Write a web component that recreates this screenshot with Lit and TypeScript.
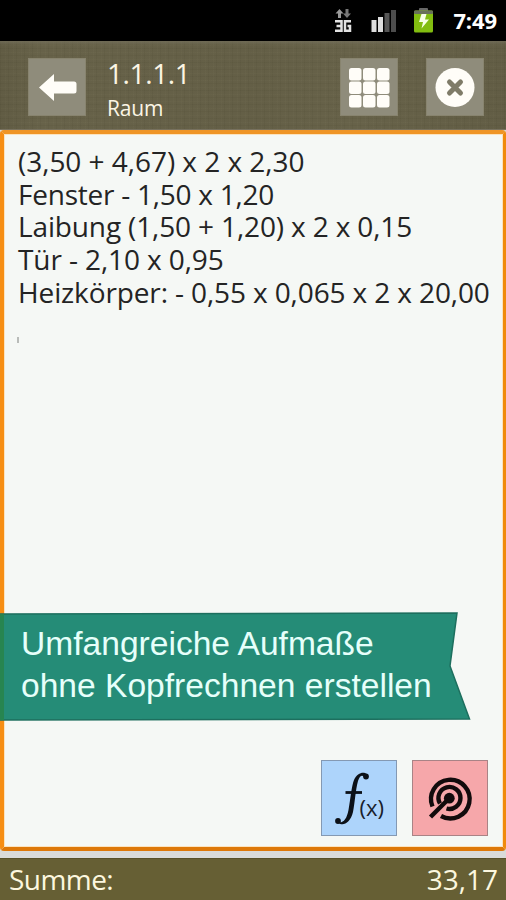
import { LitElement, html, svg, css } from "lit";
import { customElement } from "lit/decorators.js";
import { styleMap } from "lit/directives/style-map.js";

@customElement("app-root")
export class AppRoot extends LitElement {
  static styles = css`
    :host {
      display: flex;
      flex-direction: column;
      position: relative;
      width: 506px;
      height: 900px;
      overflow: hidden;
      background: #d9dbd9;
      font-family: "Open Sans", "Noto Sans", sans-serif;
    }
    * { box-sizing: border-box; }
    svg { display: block; }
    .status {
      flex: none;
      height: 41px;
      background: #000;
      display: flex;
      justify-content: flex-end;
      align-items: center;
      padding-right: 9px;
    }
    .status svg { width: 106px; height: 41px; margin-right: 14px; }
    .time { color: #fff; font-weight: 700; font-size: 22px; line-height: 41px; letter-spacing: -0.1px; }
    .header {
      flex: none;
      height: 89px;
      display: flex;
      align-items: center;
      padding: 4px 22px 0 28px;
      background:
        linear-gradient(rgba(120, 116, 98, 0.6), rgba(110, 108, 92, 0) 4px),
        linear-gradient(90deg, rgba(40, 35, 20, 0.1), transparent 8%, rgba(40, 35, 20, 0.05) 50%, transparent 70%, rgba(40, 35, 20, 0.08)),
        repeating-linear-gradient(90deg, rgba(40, 38, 15, 0.05) 0 1px, transparent 1px 5px, rgba(150, 145, 115, 0.05) 5px 6px, transparent 6px 8px),
        repeating-linear-gradient(rgba(40, 38, 15, 0.05) 0 1px, transparent 1px 4px, rgba(150, 145, 115, 0.05) 4px 5px, transparent 5px 7px),
        #676249;
      border-bottom: 1px solid #77715f;
    }
    .tile { flex: none; width: 58px; height: 58px; background: #8f8c7b; border: 1px solid #88846f; }
    .tile svg { width: 56px; height: 56px; }
    .titles { flex: 1; padding: 3px 0 0 21px; color: #fbf5e4; }
    .number { font-size: 28px; line-height: 36px; height: 36px; letter-spacing: -0.4px; }
    .room { font-size: 21px; line-height: 30px; height: 30px; margin-top: 2px; letter-spacing: -0.2px; }
    .grid-tile { margin-right: 28px; }
    .editor {
      flex: none;
      height: 721px;
      background: #f5f8f5;
      border: solid #f28c12;
      border-width: 4px 3px 4px 4px;
      border-color: #ef9526 #f08a0c #dd7808 #f68e14;
      border-radius: 4px;
      box-shadow: inset 0 0 0 1px #fbe3bf;
      padding: 11px 0 0 14px;
      position: relative;
    }
    .line { font-size: 28px; line-height: 32.7px; height: 32.7px; white-space: pre; color: #242424; letter-spacing: -0.02px; }
    .label { letter-spacing: -0.56px; }
    .cursor { width: 2px; height: 6px; background: #b9bcb9; margin: 29px 0 0 -1px; }
    .actions { position: absolute; right: 15px; bottom: 11px; display: flex; gap: 15px; }
    .action { width: 76px; height: 76px; border: 1px solid #8499b3; background: #add4fb; }
    .action svg { width: 74px; height: 74px; }
    .record { background: #f6a7aa; border-color: #a98386; }
    .banner { position: absolute; left: 0; top: 611px; width: 472px; height: 110px; }
    .banner svg { position: absolute; left: 0; top: 0; }
    .caption {
      position: relative;
      padding: 12px 0 0 21px;
      font-family: "Liberation Sans", Arial, sans-serif;
      font-size: 33.6px;
      line-height: 42px;
      color: #e6fffa;
      white-space: nowrap;
    }
    .footer {
      flex: none;
      margin-top: auto;
      height: 42px;
      background: #665f34;
      border-top: 1px solid #575129;
      display: flex;
      justify-content: space-between;
      padding: 0 8px 0 9px;
      font-size: 28px;
      line-height: 41px;
      color: #fcf7df;
    }
  `;

  private lines: { text: string; tracking: number }[] = [
    { text: "(3,50 + 4,67) x 2 x 2,30", tracking: -0.04 },
    { text: "Fenster - 1,50 x 1,20", tracking: -0.24 },
    { text: "Laibung (1,50 + 1,20) x 2 x 0,15", tracking: -0.14 },
    { text: "Tür - 2,10 x 0,95", tracking: -0.1 },
    { text: "Heizkörper: - 0,55 x 0,065 x 2 x 20,00", tracking: -0.12 },
  ];

  render() {
    return html`
      <div class="status">
        <svg viewBox="333 0 106 41">
          <path d="M339.500 9l4 4.500h-2.500v4.500h-3v-4.500h-2.500z" fill="#999"></path>
          <path d="M347 18l-4-4.500h2.500V9h3v4.500h2.500z" fill="#777"></path>
          <path d="M335 21.300h6.500v9.400H335M336.500 26h5M351 21.300h-6v9.400h5v-4.700h-2.500" fill="none" stroke="#e2e2e2" stroke-width="2.500"></path>
          <rect x="371.500" y="20" width="5" height="12" fill="#ddd"></rect>
          <rect x="378" y="17" width="5" height="15" fill="#ddd"></rect>
          <rect x="384.500" y="13" width="5" height="19" fill="#555"></rect>
          <rect x="391" y="10" width="5" height="22" fill="#4d4d4d"></rect>
          <rect x="419" y="8" width="9" height="4" rx="1" fill="#666"></rect>
          <rect x="414" y="10.500" width="19" height="22" rx="1.500" fill="#82bd10"></rect>
          <rect x="414" y="10.500" width="19" height="3.500" rx="1" fill="#68705a"></rect>
          <path d="M421.500 14h5l-1.500 5.500h4l-7.500 9 1.500-6.500h-4z" fill="#f7ffe5"></path>
        </svg>
        <div class="time">7:49</div>
      </div>
      <div class="header">
        <div class="tile">
          <svg viewBox="0 0 56 56"><path d="M10 28.500L25 15V22.500H45Q47.500 22.500 47.500 25V32Q47.500 34.500 45 34.500H25V42Z" fill="#fffdf8"></path></svg>
        </div>
        <div class="titles">
          <div class="number">1.1.1.1</div>
          <div class="room">Raum</div>
        </div>
        <div class="tile grid-tile">
          <svg viewBox="0 0 56 56">
            ${[0, 1, 2].map((r) => [0, 1, 2].map((c) => svg`<rect x=${8 + c * 14} y=${9 + r * 13.5} width="12.500" height="12.500" rx="2.500" fill="#fffdf8"></rect>`))}
          </svg>
        </div>
        <div class="tile">
          <svg viewBox="0 0 56 56">
            <circle cx="28" cy="28.500" r="19.500" fill="#fffdf8"></circle>
            <path d="M22.500 23l11 11M33.500 23l-11 11" stroke="#7f7b68" stroke-width="5" stroke-linecap="round"></path>
          </svg>
        </div>
      </div>
      <div class="editor">
        ${this.lines.map((l) => html`<div class="line" style=${styleMap({ letterSpacing: `${l.tracking}px` })}>${l.text}</div>`)}
        <div class="cursor"></div>
        <div class="actions">
          <div class="action">
            <svg viewBox="0 0 74 74">
              <path d="M46 16.500C46 10 36 9.500 32 19C29.500 25 28.500 38 26.500 49C24.500 59 21 62.500 15.500 61C20 66 28 63 31 51C33 41 33.500 29 36 20C38 13.500 41 13.500 43 17Z" fill="#0c1118"></path>
              <circle cx="44" cy="15.500" r="2.900" fill="#0c1118"></circle>
              <circle cx="16" cy="60" r="2.900" fill="#0c1118"></circle>
              <path d="M23.500 31.500H40" stroke="#0c1118" stroke-width="2.800"></path>
              <text x="37.500" y="55" font-size="21" fill="#18202b" textLength="24.500" lengthAdjust="spacingAndGlyphs">(x)</text>
            </svg>
          </div>
          <div class="action record">
            <svg viewBox="0 0 74 74" fill="none" stroke="#120b0c" stroke-width="4.400">
              <path d="M19.500 45.500A19.300 19.300 0 1 1 28 55"></path>
              <path d="M27 42.500A11 11 0 1 1 33.500 47.500"></path>
              <path d="M36.500 37L17.500 56"></path>
              <circle cx="36.300" cy="37.200" r="5.400" fill="#120b0c" stroke="none"></circle>
            </svg>
          </div>
        </div>
      </div>
      <div class="footer"><span class="label">Summe:</span><span>33,17</span></div>
      <div class="banner">
        <svg width="472" height="110" viewBox="0 0 472 110">
          <path d="M-2 3L457 2L450 55L469.500 108L-2 109Z" fill="#258c77" stroke="#1d6f5e" stroke-width="1.500"></path>
          <rect x="0" y="3" width="4" height="106" fill="#278550"></rect>
        </svg>
        <div class="caption">Umfangreiche Aufmaße<br />ohne Kopfrechnen erstellen</div>
      </div>
    `;
  }
}
